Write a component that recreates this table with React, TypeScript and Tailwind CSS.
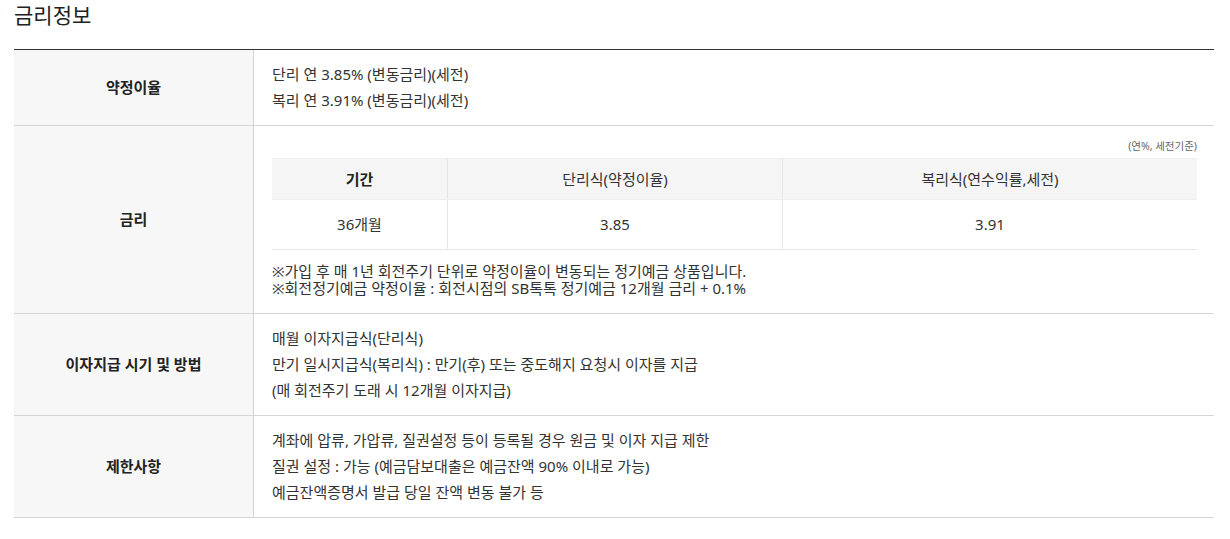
const rows = [
	{ label: '약정이율', lines: ['단리 연 3.85% (변동금리)(세전)', '복리 연 3.91% (변동금리)(세전)'] },
];

const Row = ({ label, children }: { label: string; children: React.ReactNode }) => (
	<div className="grid grid-cols-[240px_1fr] border-b border-[#d5d5d5]">
		<div className="flex items-center justify-center bg-[#f7f7f7] border-r border-[#d5d5d5] font-bold text-[15px] text-[#222]">
			{label}
		</div>
		<div className="pl-[18px] pr-[17px]">{children}</div>
	</div>
);

const Lines = ({ lines }: { lines: string[] }) => (
	<div className="pt-[11px] pb-[12px] leading-[26px]">
		{lines.map((l) => (
			<p key={l}>{l}</p>
		))}
	</div>
);

export default function App() {
	return (
		<div className="ml-[14px] w-[1200px] text-[15px] text-[#333]" style={{ fontFamily: '"Noto Sans", "Noto Sans CJK KR", sans-serif' }}>
			<h2 className="pt-[1px] h-[49px] text-[21px] leading-[29px] text-[#222]">금리정보</h2>
			<div className="border-t border-[#333]">
				{rows.map((r) => (
					<Row key={r.label} label={r.label}>
						<Lines lines={r.lines} />
					</Row>
				))}
				<Row label="금리">
					<div className="pt-3 pb-[16px]">
						<p className="text-right text-[10.5px] leading-[16px] text-[#666] mb-[4px]">(연%, 세전기준)</p>
						<div className="border-b border-[#e6e6e6]">
							<div className="grid grid-cols-[175px_335px_1fr] bg-[#f5f5f5] h-[41px] items-stretch border-t border-[#eee]">
								<div className="flex items-center justify-center font-bold text-[#222]">기간</div>
								<div className="flex items-center justify-center border-l border-[#e6e6e6]">단리식(약정이율)</div>
								<div className="flex items-center justify-center border-l border-[#e6e6e6]">복리식(연수익률,세전)</div>
							</div>
							<div className="grid grid-cols-[175px_335px_1fr] h-[50px] border-t border-[#eee]">
								<div className="flex items-center justify-center">36개월</div>
								<div className="flex items-center justify-center border-l border-[#e6e6e6]">3.85</div>
								<div className="flex items-center justify-center border-l border-[#e6e6e6]">3.91</div>
							</div>
						</div>
						<div className="mt-[13px] leading-[17px]">
							<p>※가입 후 매 1년 회전주기 단위로 약정이율이 변동되는 정기예금 상품입니다.</p>
							<p>※회전정기예금 약정이율 : 회전시점의 SB톡톡 정기예금 12개월 금리 + 0.1%</p>
						</div>
					</div>
				</Row>
				<Row label="이자지급 시기 및 방법">
					<Lines
						lines={[
							'매월 이자지급식(단리식)',
							'만기 일시지급식(복리식) : 만기(후) 또는 중도해지 요청시 이자를 지급',
							'(매 회전주기 도래 시 12개월 이자지급)',
						]}
					/>
				</Row>
				<Row label="제한사항">
					<Lines
						lines={[
							'계좌에 압류, 가압류, 질권설정 등이 등록될 경우 원금 및 이자 지급 제한',
							'질권 설정 : 가능 (예금담보대출은 예금잔액 90% 이내로 가능)',
							'예금잔액증명서 발급 당일 잔액 변동 불가 등',
						]}
					/>
				</Row>
			</div>
		</div>
	);
}
